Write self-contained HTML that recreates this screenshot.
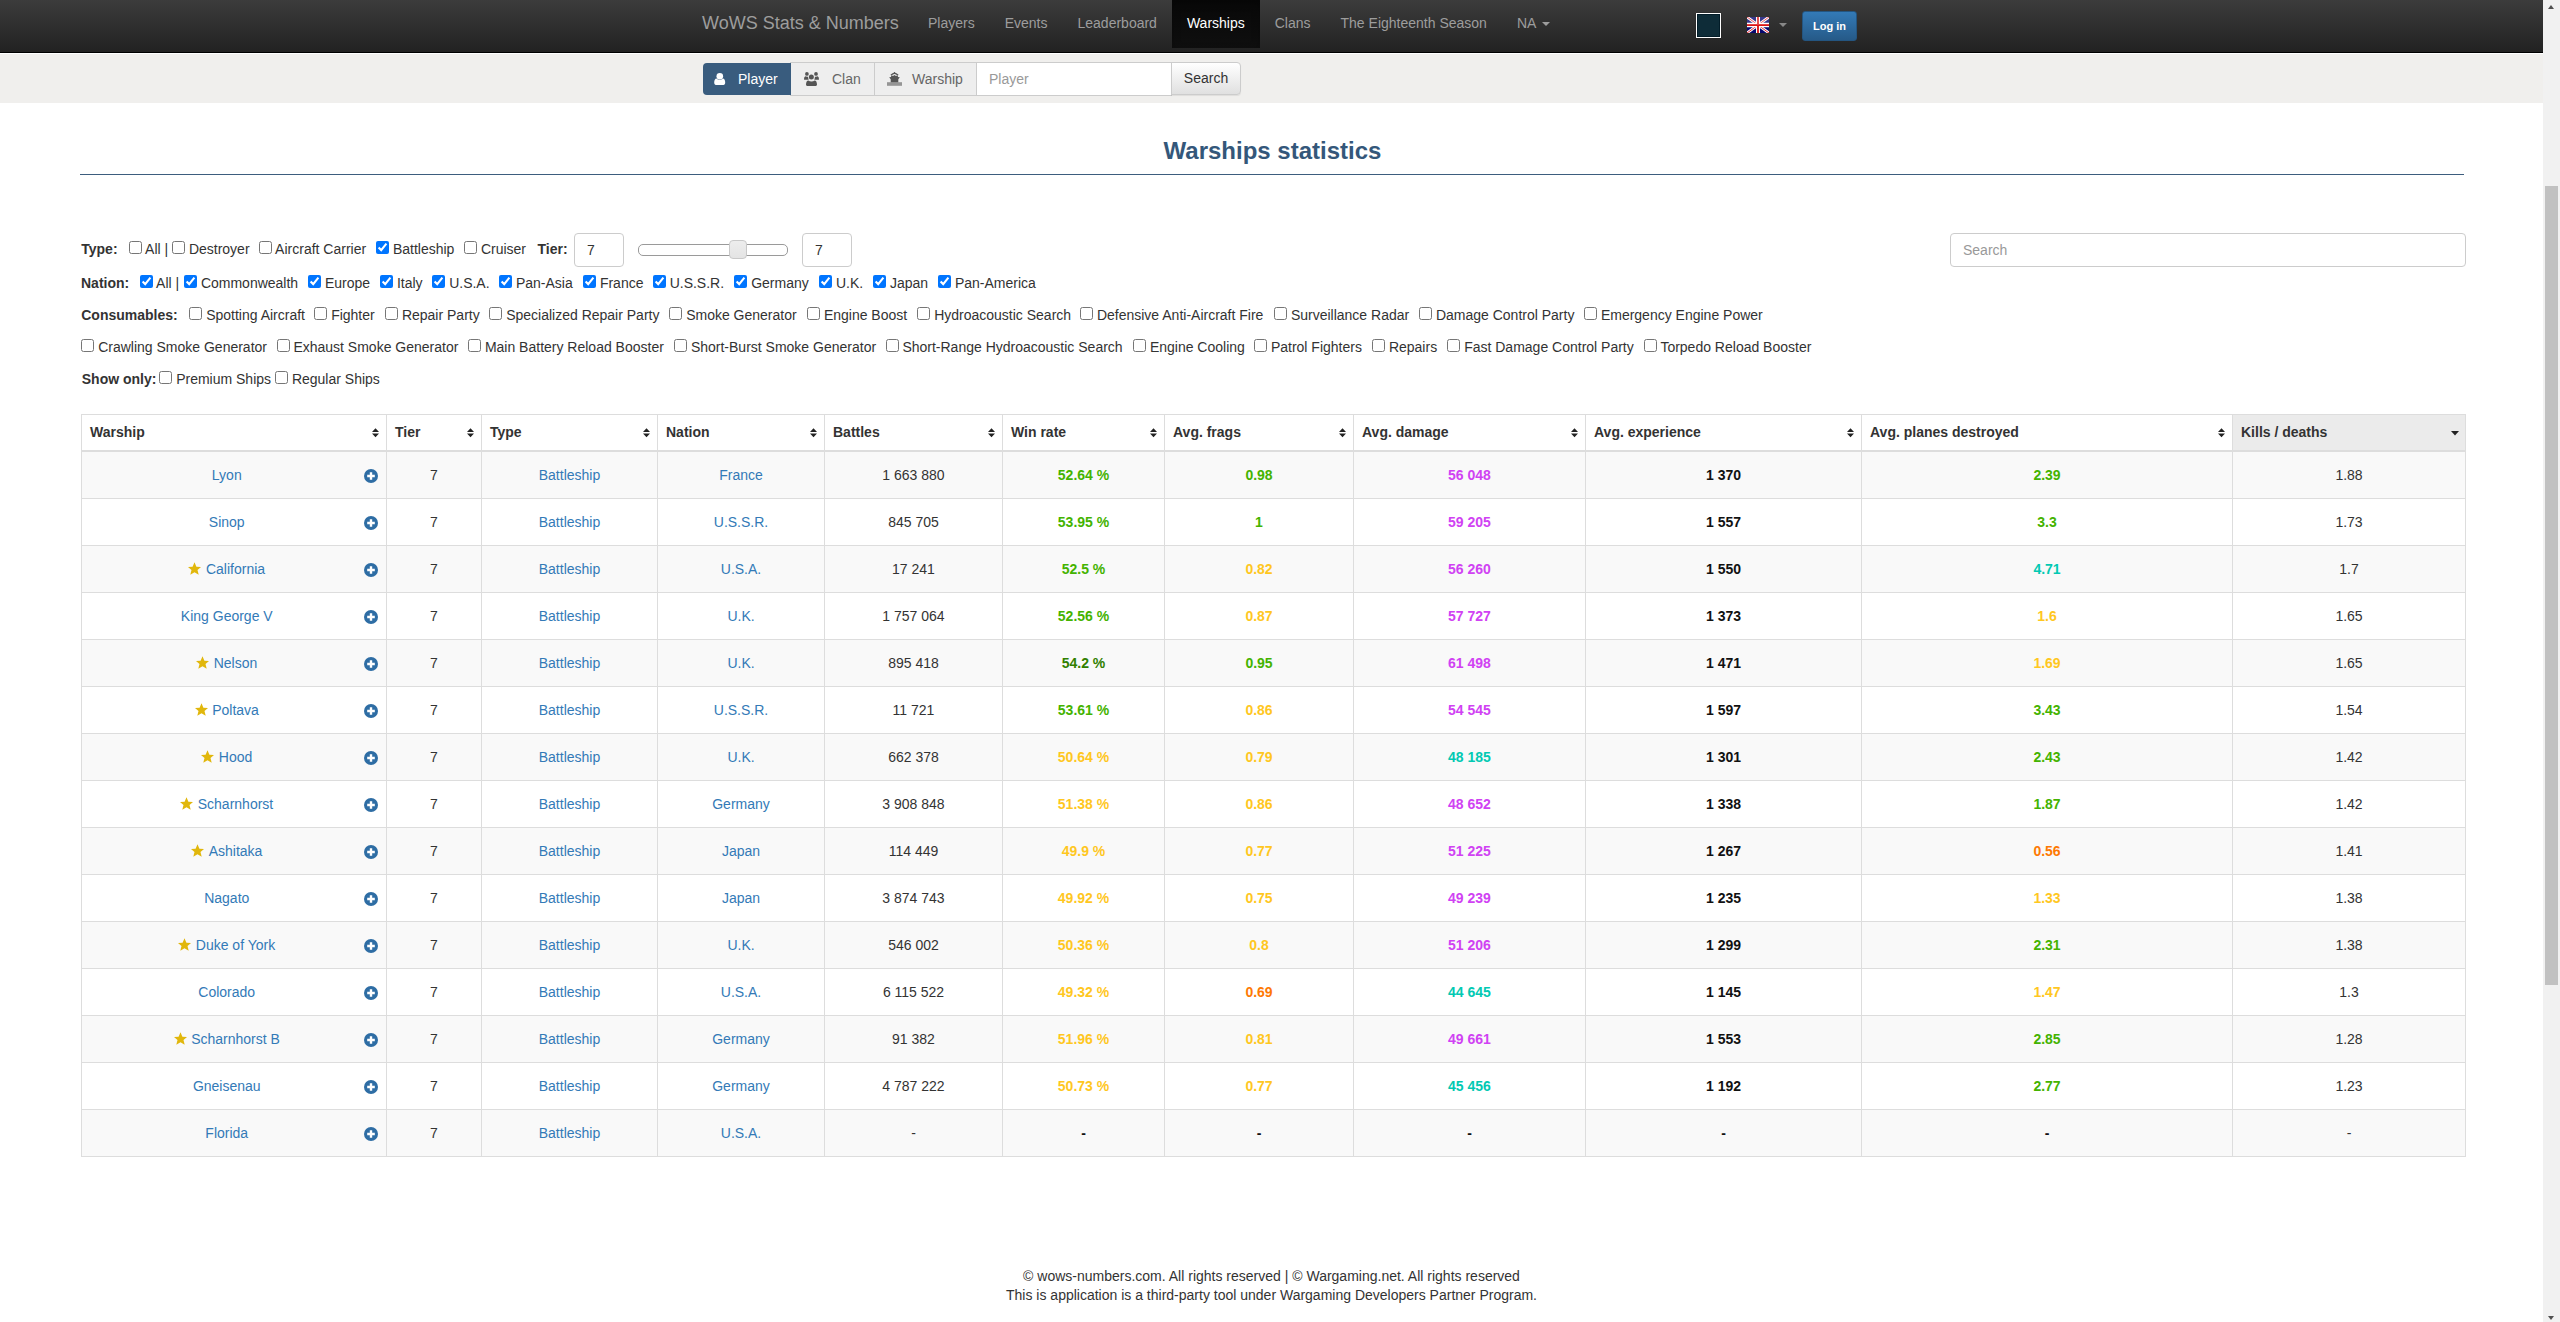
<!DOCTYPE html>
<html><head><meta charset="utf-8">
<style>
*{box-sizing:border-box}
html,body{margin:0;padding:0}
body{width:2560px;height:1322px;overflow:hidden;position:relative;background:#fff;font-family:"Liberation Sans",sans-serif;font-size:14px;line-height:20px;color:#333}
#sb{position:absolute;left:2543px;top:0;width:17px;height:1322px;background:#f1f1f1}
#sb .thumb{position:absolute;left:2px;top:186px;width:13px;height:799px;background:#c1c1c1}
#sb .up{position:absolute;left:5px;top:5px;width:0;height:0;border-left:3.5px solid transparent;border-right:3.5px solid transparent;border-bottom:4px solid #505050}
#sb .dn{position:absolute;left:5px;top:1316px;width:0;height:0;border-left:3.5px solid transparent;border-right:3.5px solid transparent;border-top:4px solid #505050}
#nav{position:absolute;left:0;top:0;width:2543px;height:53px;background:linear-gradient(to bottom,#3c3c3c 0,#222 100%);border-bottom:1px solid #000}
#nav .brand{position:absolute;left:687px;top:0;height:48px;padding:0 15px;font-size:18px;line-height:46px;color:#9d9d9d}
#nav ul{position:absolute;left:913px;top:0;margin:0;padding:0;list-style:none;display:flex}
#nav li a{display:block;padding:0 15px;height:48px;line-height:46px;color:#9d9d9d;text-decoration:none}
#nav li.active a{color:#fff;background:linear-gradient(to bottom,#080808 0,#0f0f0f 100%);box-shadow:inset 0 3px 9px rgba(0,0,0,.25)}
.caret{display:inline-block;width:0;height:0;margin-left:3px;vertical-align:middle;border-top:4px solid;border-right:4px solid transparent;border-left:4px solid transparent}
#sq{position:absolute;left:1696px;top:13px;width:25px;height:25px;border:1px solid #fff;box-shadow:inset 0 0 0 1px #021c28,0 0 1px rgba(0,0,0,.5);background:#0e2c38}
#flag{position:absolute;left:1747px;top:17px;width:22px;height:16px}
#lcaret{position:absolute;left:1779px;top:23px;border-top:4px solid #888;border-left:4px solid transparent;border-right:4px solid transparent}
#login{position:absolute;left:1802px;top:11px;width:55px;height:30px;border:1px solid #245580;border-radius:3px;background:linear-gradient(to bottom,#337ab7 0,#265a88 100%);color:#fff;font-size:11px;font-weight:bold;line-height:28px;text-align:center}
#sub{position:absolute;left:0;top:53px;width:2543px;height:50px;background:#f0efed;border-top:1px solid #fff}
.gb{position:absolute;top:62px;height:34px;border:1px solid #ccc;background:#eee;color:#666;line-height:32px;white-space:nowrap}
.gb svg{position:absolute}
.gb span{position:absolute;top:0}
#bplayer{left:703px;top:63px;height:32px;width:88px;background:#395c7e;border:0;color:#fff;border-radius:4px 0 0 4px;line-height:32px;z-index:2}
#bclan{left:790px;width:86px}
#bship{left:874px;width:103px}
#binp{position:absolute;left:976px;top:62px;width:196px;height:34px;border:1px solid #ccc;background:#fff;color:#999;padding-left:12px;line-height:32px}
#bsearch{position:absolute;left:1171px;top:62px;width:70px;height:33px;border:1px solid #ccc;border-radius:0 4px 4px 0;background:linear-gradient(to bottom,#fff 0,#e0e0e0 100%);color:#333;line-height:30px;text-align:center;box-shadow:0 1px 1px rgba(0,0,0,.075)}
h2{position:absolute;left:80px;top:137px;width:2385px;margin:0;text-align:center;font-size:24px;line-height:28px;font-weight:bold;color:#34577a}
#hr{position:absolute;left:80px;top:174px;width:2384px;height:1px;background:#3d5d7e}
.frow{position:absolute;left:0;top:0;height:0;white-space:nowrap;line-height:20px}
.frow b{position:absolute;top:-15px;font-weight:bold}
.frow .it{position:absolute;top:-15px}
input[type=checkbox]{margin:0;width:13px;height:13px;vertical-align:baseline}
.tin{position:absolute;top:233px;width:50px;height:34px;border:1px solid #ccc;border-radius:4px;background:#fff;padding-left:12px;line-height:32px;color:#333}
#slider{position:absolute;left:638px;top:244px;width:150px;height:12px;border:1px solid #9a9a9a;border-radius:5px;background:#fff}
#thumb{position:absolute;left:729px;top:240px;width:18px;height:19px;border:1px solid #c8c8c8;border-radius:4px;background:linear-gradient(#ededed,#e4e4e4)}
#search2{position:absolute;left:1950px;top:233px;width:516px;height:34px;border:1px solid #ccc;border-radius:4px;background:#fff;color:#999;padding-left:12px;line-height:32px}
table{position:absolute;left:81px;top:414px;border-collapse:collapse;table-layout:fixed;width:2385px}
th,td{border:1px solid #ddd;padding:0 8px}
th{height:36px;text-align:left;font-weight:bold;position:relative;border-bottom:2px solid #ddd;color:#333;line-height:20px}
th svg{position:absolute;right:7px;top:13px}
th.sorted{background:#ebebeb}
td{height:47px;text-align:center;line-height:20px}
tbody tr:nth-child(odd) td{background:#f9f9f9}
tbody tr:first-child td{height:48px}
td a{color:#337ab7}
td.ws{position:relative}
td.ws a{display:inline-block;padding-right:14.5px}
.plus{position:absolute;right:8px;top:17px;width:14px;height:14px}
.star{width:13px;height:13px;vertical-align:-1px;margin-right:4.5px}
.v{font-weight:bold}
.g{color:#44b300}.dg{color:#318000}.y{color:#ffc71f}.o{color:#fe7903}.m{color:#d042f3}.c{color:#02c9b3}.k{color:#111}
#foot{position:absolute;left:0;top:1267px;width:2543px;text-align:center;line-height:19px}
</style></head><body>
<div id="nav">
  <div class="brand">WoWS Stats &amp; Numbers</div>
  <ul>
    <li><a>Players</a></li><li><a>Events</a></li><li><a>Leaderboard</a></li><li class="active"><a>Warships</a></li><li><a>Clans</a></li><li><a>The Eighteenth Season</a></li><li><a>NA <span class="caret"></span></a></li>
  </ul>
  <div id="sq"></div>
  <svg id="flag" viewBox="0 0 60 40" preserveAspectRatio="none"><rect width="60" height="40" fill="#06066e"/><path d="M0,0 L60,40 M60,0 L0,40" stroke="#fff" stroke-width="7"/><path d="M0,0 L60,40 M60,0 L0,40" stroke="#e8202a" stroke-width="2.5"/><path d="M30,0 V40 M0,20 H60" stroke="#fff" stroke-width="11"/><path d="M30,0 V40 M0,20 H60" stroke="#dc1414" stroke-width="5"/><rect width="60" height="20" fill="#fff" fill-opacity=".2"/></svg>
  <div id="lcaret"></div>
  <div id="login">Log in</div>
</div>
<div id="sub"></div>
<div class="gb" id="bplayer"><svg style="left:11px;top:9px" width="12" height="13" viewBox="0 0 12 13"><circle cx="5.8" cy="4.3" r="3.3" fill="#fff"/><path d="M0.2 10.5 C0.2 8.5 1 6.4 2.6 6.4 C3.6 7.4 4.6 7.8 5.7 7.8 C6.8 7.8 7.8 7.4 8.8 6.4 C10.4 6.4 11.2 8.5 11.2 10.5 C11.2 12 10.5 13 9.5 13 L1.9 13 C0.9 13 0.2 12 0.2 10.5Z" fill="#fff"/></svg><span style="left:35px">Player</span></div>
<div class="gb" id="bclan"><svg style="left:13px;top:9px" width="15" height="14" viewBox="0 0 15 14"><circle cx="2.9" cy="1.9" r="1.85" fill="#555"/><circle cx="12" cy="1.9" r="1.85" fill="#555"/><circle cx="7.35" cy="4.9" r="2.5" fill="#555"/><path d="M0.1 7.7 C-0.1 5.5 0.6 4.2 1.9 4.2 C2.4 4.6 3.1 4.8 4 4.8 C4.1 5.8 4.4 6.8 4.7 7.7 Z M14.9 7.7 C15.1 5.5 14.4 4.2 13.1 4.2 C12.6 4.6 11.9 4.8 11 4.8 C10.9 5.8 10.6 6.8 10.3 7.7 Z" fill="#555"/><path d="M2 12.5 C2 10 3 8.4 4.4 8.4 C5.2 9.1 6.2 9.5 7.5 9.5 C8.8 9.5 9.8 9.1 10.6 8.4 C12 8.4 13 10 13 12.5 C13 13.4 12.5 13.9 11.8 13.9 L3.2 13.9 C2.5 13.9 2 13.4 2 12.5Z" fill="#555"/></svg><span style="left:41px">Clan</span></div>
<div class="gb" id="bship"><svg style="left:12px;top:9px" width="15" height="14" viewBox="0 0 15 14"><path d="M3.9 3.3 Q7.5 -0.5 11.1 3.3" stroke="#555" stroke-width="1.3" fill="none"/><circle cx="7.5" cy="0.8" r="0.8" fill="#555"/><path d="M7.5 3.1 L8.4 3.8 L10.9 3.8 L10.9 4.9 L12.8 5.3 L11.3 7.3 L11.3 10.8 L3.7 10.8 L3.7 7.3 L2.2 5.3 L4.1 4.9 L4.1 3.8 L6.6 3.8 Z" fill="#555"/><rect x="0" y="10.2" width="15" height="3.6" fill="#959595"/></svg><span style="left:37px">Warship</span></div>
<div id="binp">Player</div>
<div id="bsearch">Search</div>
<h2>Warships statistics</h2>
<div id="hr"></div>

<div class="frow" style="top:254px"><b style="left:81.25px">Type:</b><label class="it" style="left:129px"><input type="checkbox"> All |</label><label class="it" style="left:172px"><input type="checkbox"> Destroyer</label><label class="it" style="left:259px"><input type="checkbox"> Aircraft Carrier</label><label class="it" style="left:464px"><input type="checkbox"> Cruiser</label></div>
<div class="frow" style="top:254px"><label class="it" style="left:376px"><input type="checkbox" checked> Battleship</label><b style="left:537.5px">Tier:</b></div>
<div class="frow" style="top:288px"><b style="left:81px">Nation:</b><label class="it" style="left:140px"><input type="checkbox" checked> All |</label><label class="it" style="left:184px"><input type="checkbox" checked> Commonwealth</label><label class="it" style="left:308px"><input type="checkbox" checked> Europe</label><label class="it" style="left:380px"><input type="checkbox" checked> Italy</label><label class="it" style="left:432.25px"><input type="checkbox" checked> U.S.A.</label><label class="it" style="left:499px"><input type="checkbox" checked> Pan-Asia</label><label class="it" style="left:583px"><input type="checkbox" checked> France</label><label class="it" style="left:652.75px"><input type="checkbox" checked> U.S.S.R.</label><label class="it" style="left:734.25px"><input type="checkbox" checked> Germany</label><label class="it" style="left:819px"><input type="checkbox" checked> U.K.</label><label class="it" style="left:873px"><input type="checkbox" checked> Japan</label><label class="it" style="left:938px"><input type="checkbox" checked> Pan-America</label></div>
<div class="frow" style="top:320px"><b style="left:81.25px">Consumables:</b><label class="it" style="left:189.25px"><input type="checkbox"> Spotting Aircraft</label><label class="it" style="left:314.25px"><input type="checkbox"> Fighter</label><label class="it" style="left:385px"><input type="checkbox"> Repair Party</label><label class="it" style="left:489.25px"><input type="checkbox"> Specialized Repair Party</label><label class="it" style="left:669.25px"><input type="checkbox"> Smoke Generator</label><label class="it" style="left:807px"><input type="checkbox"> Engine Boost</label><label class="it" style="left:917.25px"><input type="checkbox"> Hydroacoustic Search</label><label class="it" style="left:1080px"><input type="checkbox"> Defensive Anti-Aircraft Fire</label><label class="it" style="left:1274px"><input type="checkbox"> Surveillance Radar</label><label class="it" style="left:1419px"><input type="checkbox"> Damage Control Party</label><label class="it" style="left:1584px"><input type="checkbox"> Emergency Engine Power</label></div>
<div class="frow" style="top:352px"><label class="it" style="left:81.25px"><input type="checkbox"> Crawling Smoke Generator</label><label class="it" style="left:276.5px"><input type="checkbox"> Exhaust Smoke Generator</label><label class="it" style="left:468px"><input type="checkbox"> Main Battery Reload Booster</label><label class="it" style="left:674px"><input type="checkbox"> Short-Burst Smoke Generator</label><label class="it" style="left:885.5px"><input type="checkbox"> Short-Range Hydroacoustic Search</label><label class="it" style="left:1133px"><input type="checkbox"> Engine Cooling</label><label class="it" style="left:1254px"><input type="checkbox"> Patrol Fighters</label><label class="it" style="left:1372px"><input type="checkbox"> Repairs</label><label class="it" style="left:1447.25px"><input type="checkbox"> Fast Damage Control Party</label><label class="it" style="left:1643.75px"><input type="checkbox"> Torpedo Reload Booster</label></div>
<div class="frow" style="top:384px"><b style="left:81.75px">Show only:</b><label class="it" style="left:159.25px"><input type="checkbox"> Premium Ships</label><label class="it" style="left:275px"><input type="checkbox"> Regular Ships</label></div>
<div class="tin" style="left:574px">7</div>
<div id="slider"></div><div id="thumb"></div>
<div class="tin" style="left:802px">7</div>
<div id="search2">Search</div>

<table>
<colgroup><col style="width:305px"><col style="width:95px"><col style="width:176px"><col style="width:167px"><col style="width:178px"><col style="width:162px"><col style="width:189px"><col style="width:232px"><col style="width:276px"><col style="width:371px"><col style="width:233px"></colgroup>
<thead><tr>
<th>Warship<svg width="7" height="10" viewBox="0 0 7 10"><path d="M0 4H7L3.5 0.2Z M0 5.4H7L3.5 9.2Z" fill="#222"/></svg></th><th>Tier<svg width="7" height="10" viewBox="0 0 7 10"><path d="M0 4H7L3.5 0.2Z M0 5.4H7L3.5 9.2Z" fill="#222"/></svg></th><th>Type<svg width="7" height="10" viewBox="0 0 7 10"><path d="M0 4H7L3.5 0.2Z M0 5.4H7L3.5 9.2Z" fill="#222"/></svg></th><th>Nation<svg width="7" height="10" viewBox="0 0 7 10"><path d="M0 4H7L3.5 0.2Z M0 5.4H7L3.5 9.2Z" fill="#222"/></svg></th><th>Battles<svg width="7" height="10" viewBox="0 0 7 10"><path d="M0 4H7L3.5 0.2Z M0 5.4H7L3.5 9.2Z" fill="#222"/></svg></th><th>Win rate<svg width="7" height="10" viewBox="0 0 7 10"><path d="M0 4H7L3.5 0.2Z M0 5.4H7L3.5 9.2Z" fill="#222"/></svg></th><th>Avg. frags<svg width="7" height="10" viewBox="0 0 7 10"><path d="M0 4H7L3.5 0.2Z M0 5.4H7L3.5 9.2Z" fill="#222"/></svg></th><th>Avg. damage<svg width="7" height="10" viewBox="0 0 7 10"><path d="M0 4H7L3.5 0.2Z M0 5.4H7L3.5 9.2Z" fill="#222"/></svg></th><th>Avg. experience<svg width="7" height="10" viewBox="0 0 7 10"><path d="M0 4H7L3.5 0.2Z M0 5.4H7L3.5 9.2Z" fill="#222"/></svg></th><th>Avg. planes destroyed<svg width="7" height="10" viewBox="0 0 7 10"><path d="M0 4H7L3.5 0.2Z M0 5.4H7L3.5 9.2Z" fill="#222"/></svg></th><th class="sorted">Kills / deaths<svg width="8" height="5" viewBox="0 0 8 5" style="right:6px;top:16px"><path d="M0 0H8L4 4.5Z" fill="#222"/></svg></th>
</tr></thead>
<tbody>
<tr><td class="ws"><svg class="plus" viewBox="0 0 14 14"><circle cx="7" cy="7" r="7" fill="#2e6da4"/><path d="M7 3.2V10.8M3.2 7H10.8" stroke="#fff" stroke-width="2.4"/></svg><a>Lyon</a></td><td>7</td><td><a>Battleship</a></td><td><a>France</a></td><td>1 663 880</td><td class="v g">52.64 %</td><td class="v g">0.98</td><td class="v m">56 048</td><td class="v k">1 370</td><td class="v g">2.39</td><td>1.88</td></tr>
<tr><td class="ws"><svg class="plus" viewBox="0 0 14 14"><circle cx="7" cy="7" r="7" fill="#2e6da4"/><path d="M7 3.2V10.8M3.2 7H10.8" stroke="#fff" stroke-width="2.4"/></svg><a>Sinop</a></td><td>7</td><td><a>Battleship</a></td><td><a>U.S.S.R.</a></td><td>845 705</td><td class="v g">53.95 %</td><td class="v g">1</td><td class="v m">59 205</td><td class="v k">1 557</td><td class="v g">3.3</td><td>1.73</td></tr>
<tr><td class="ws"><svg class="plus" viewBox="0 0 14 14"><circle cx="7" cy="7" r="7" fill="#2e6da4"/><path d="M7 3.2V10.8M3.2 7H10.8" stroke="#fff" stroke-width="2.4"/></svg><a><svg class="star" viewBox="0 0 26 26"><path d="M13 0.5 L16.8 9.4 L26 9.8 L19 16 L21.4 25.6 L13 20.5 L4.6 25.6 L7 16 L0 9.8 L9.2 9.4 Z" fill="#e1b70c"/></svg>California</a></td><td>7</td><td><a>Battleship</a></td><td><a>U.S.A.</a></td><td>17 241</td><td class="v g">52.5 %</td><td class="v y">0.82</td><td class="v m">56 260</td><td class="v k">1 550</td><td class="v c">4.71</td><td>1.7</td></tr>
<tr><td class="ws"><svg class="plus" viewBox="0 0 14 14"><circle cx="7" cy="7" r="7" fill="#2e6da4"/><path d="M7 3.2V10.8M3.2 7H10.8" stroke="#fff" stroke-width="2.4"/></svg><a>King George V</a></td><td>7</td><td><a>Battleship</a></td><td><a>U.K.</a></td><td>1 757 064</td><td class="v g">52.56 %</td><td class="v y">0.87</td><td class="v m">57 727</td><td class="v k">1 373</td><td class="v y">1.6</td><td>1.65</td></tr>
<tr><td class="ws"><svg class="plus" viewBox="0 0 14 14"><circle cx="7" cy="7" r="7" fill="#2e6da4"/><path d="M7 3.2V10.8M3.2 7H10.8" stroke="#fff" stroke-width="2.4"/></svg><a><svg class="star" viewBox="0 0 26 26"><path d="M13 0.5 L16.8 9.4 L26 9.8 L19 16 L21.4 25.6 L13 20.5 L4.6 25.6 L7 16 L0 9.8 L9.2 9.4 Z" fill="#e1b70c"/></svg>Nelson</a></td><td>7</td><td><a>Battleship</a></td><td><a>U.K.</a></td><td>895 418</td><td class="v dg">54.2 %</td><td class="v g">0.95</td><td class="v m">61 498</td><td class="v k">1 471</td><td class="v y">1.69</td><td>1.65</td></tr>
<tr><td class="ws"><svg class="plus" viewBox="0 0 14 14"><circle cx="7" cy="7" r="7" fill="#2e6da4"/><path d="M7 3.2V10.8M3.2 7H10.8" stroke="#fff" stroke-width="2.4"/></svg><a><svg class="star" viewBox="0 0 26 26"><path d="M13 0.5 L16.8 9.4 L26 9.8 L19 16 L21.4 25.6 L13 20.5 L4.6 25.6 L7 16 L0 9.8 L9.2 9.4 Z" fill="#e1b70c"/></svg>Poltava</a></td><td>7</td><td><a>Battleship</a></td><td><a>U.S.S.R.</a></td><td>11 721</td><td class="v g">53.61 %</td><td class="v y">0.86</td><td class="v m">54 545</td><td class="v k">1 597</td><td class="v g">3.43</td><td>1.54</td></tr>
<tr><td class="ws"><svg class="plus" viewBox="0 0 14 14"><circle cx="7" cy="7" r="7" fill="#2e6da4"/><path d="M7 3.2V10.8M3.2 7H10.8" stroke="#fff" stroke-width="2.4"/></svg><a><svg class="star" viewBox="0 0 26 26"><path d="M13 0.5 L16.8 9.4 L26 9.8 L19 16 L21.4 25.6 L13 20.5 L4.6 25.6 L7 16 L0 9.8 L9.2 9.4 Z" fill="#e1b70c"/></svg>Hood</a></td><td>7</td><td><a>Battleship</a></td><td><a>U.K.</a></td><td>662 378</td><td class="v y">50.64 %</td><td class="v y">0.79</td><td class="v c">48 185</td><td class="v k">1 301</td><td class="v g">2.43</td><td>1.42</td></tr>
<tr><td class="ws"><svg class="plus" viewBox="0 0 14 14"><circle cx="7" cy="7" r="7" fill="#2e6da4"/><path d="M7 3.2V10.8M3.2 7H10.8" stroke="#fff" stroke-width="2.4"/></svg><a><svg class="star" viewBox="0 0 26 26"><path d="M13 0.5 L16.8 9.4 L26 9.8 L19 16 L21.4 25.6 L13 20.5 L4.6 25.6 L7 16 L0 9.8 L9.2 9.4 Z" fill="#e1b70c"/></svg>Scharnhorst</a></td><td>7</td><td><a>Battleship</a></td><td><a>Germany</a></td><td>3 908 848</td><td class="v y">51.38 %</td><td class="v y">0.86</td><td class="v m">48 652</td><td class="v k">1 338</td><td class="v g">1.87</td><td>1.42</td></tr>
<tr><td class="ws"><svg class="plus" viewBox="0 0 14 14"><circle cx="7" cy="7" r="7" fill="#2e6da4"/><path d="M7 3.2V10.8M3.2 7H10.8" stroke="#fff" stroke-width="2.4"/></svg><a><svg class="star" viewBox="0 0 26 26"><path d="M13 0.5 L16.8 9.4 L26 9.8 L19 16 L21.4 25.6 L13 20.5 L4.6 25.6 L7 16 L0 9.8 L9.2 9.4 Z" fill="#e1b70c"/></svg>Ashitaka</a></td><td>7</td><td><a>Battleship</a></td><td><a>Japan</a></td><td>114 449</td><td class="v y">49.9 %</td><td class="v y">0.77</td><td class="v m">51 225</td><td class="v k">1 267</td><td class="v o">0.56</td><td>1.41</td></tr>
<tr><td class="ws"><svg class="plus" viewBox="0 0 14 14"><circle cx="7" cy="7" r="7" fill="#2e6da4"/><path d="M7 3.2V10.8M3.2 7H10.8" stroke="#fff" stroke-width="2.4"/></svg><a>Nagato</a></td><td>7</td><td><a>Battleship</a></td><td><a>Japan</a></td><td>3 874 743</td><td class="v y">49.92 %</td><td class="v y">0.75</td><td class="v m">49 239</td><td class="v k">1 235</td><td class="v y">1.33</td><td>1.38</td></tr>
<tr><td class="ws"><svg class="plus" viewBox="0 0 14 14"><circle cx="7" cy="7" r="7" fill="#2e6da4"/><path d="M7 3.2V10.8M3.2 7H10.8" stroke="#fff" stroke-width="2.4"/></svg><a><svg class="star" viewBox="0 0 26 26"><path d="M13 0.5 L16.8 9.4 L26 9.8 L19 16 L21.4 25.6 L13 20.5 L4.6 25.6 L7 16 L0 9.8 L9.2 9.4 Z" fill="#e1b70c"/></svg>Duke of York</a></td><td>7</td><td><a>Battleship</a></td><td><a>U.K.</a></td><td>546 002</td><td class="v y">50.36 %</td><td class="v y">0.8</td><td class="v m">51 206</td><td class="v k">1 299</td><td class="v g">2.31</td><td>1.38</td></tr>
<tr><td class="ws"><svg class="plus" viewBox="0 0 14 14"><circle cx="7" cy="7" r="7" fill="#2e6da4"/><path d="M7 3.2V10.8M3.2 7H10.8" stroke="#fff" stroke-width="2.4"/></svg><a>Colorado</a></td><td>7</td><td><a>Battleship</a></td><td><a>U.S.A.</a></td><td>6 115 522</td><td class="v y">49.32 %</td><td class="v o">0.69</td><td class="v c">44 645</td><td class="v k">1 145</td><td class="v y">1.47</td><td>1.3</td></tr>
<tr><td class="ws"><svg class="plus" viewBox="0 0 14 14"><circle cx="7" cy="7" r="7" fill="#2e6da4"/><path d="M7 3.2V10.8M3.2 7H10.8" stroke="#fff" stroke-width="2.4"/></svg><a><svg class="star" viewBox="0 0 26 26"><path d="M13 0.5 L16.8 9.4 L26 9.8 L19 16 L21.4 25.6 L13 20.5 L4.6 25.6 L7 16 L0 9.8 L9.2 9.4 Z" fill="#e1b70c"/></svg>Scharnhorst B</a></td><td>7</td><td><a>Battleship</a></td><td><a>Germany</a></td><td>91 382</td><td class="v y">51.96 %</td><td class="v y">0.81</td><td class="v m">49 661</td><td class="v k">1 553</td><td class="v g">2.85</td><td>1.28</td></tr>
<tr><td class="ws"><svg class="plus" viewBox="0 0 14 14"><circle cx="7" cy="7" r="7" fill="#2e6da4"/><path d="M7 3.2V10.8M3.2 7H10.8" stroke="#fff" stroke-width="2.4"/></svg><a>Gneisenau</a></td><td>7</td><td><a>Battleship</a></td><td><a>Germany</a></td><td>4 787 222</td><td class="v y">50.73 %</td><td class="v y">0.77</td><td class="v c">45 456</td><td class="v k">1 192</td><td class="v g">2.77</td><td>1.23</td></tr>
<tr><td class="ws"><svg class="plus" viewBox="0 0 14 14"><circle cx="7" cy="7" r="7" fill="#2e6da4"/><path d="M7 3.2V10.8M3.2 7H10.8" stroke="#fff" stroke-width="2.4"/></svg><a>Florida</a></td><td>7</td><td><a>Battleship</a></td><td><a>U.S.A.</a></td><td>-</td><td class="v k">-</td><td class="v k">-</td><td class="v k">-</td><td class="v k">-</td><td class="v k">-</td><td>-</td></tr>
</tbody></table>

<div id="foot">© wows-numbers.com. All rights reserved | © Wargaming.net. All rights reserved<br>This is application is a third-party tool under Wargaming Developers Partner Program.</div>

<div id="sb"><div class="up"></div><div class="thumb"></div><div class="dn"></div></div>
</body></html>
